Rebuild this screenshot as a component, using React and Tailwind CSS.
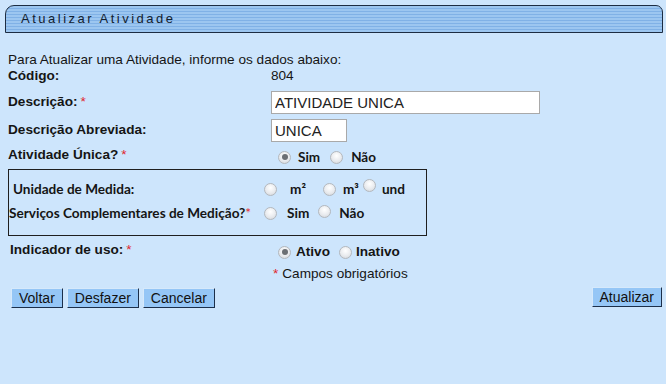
import React from "react";

function Radio({ checked, className = "" }) {
  return (
    <span
      className={
        "inline-flex items-center justify-center w-[13px] h-[13px] rounded-full border border-[#b4b8bd] bg-[radial-gradient(circle_at_50%_35%,#ffffff_0%,#e9ebee_55%,#cfd3d8_100%)] shrink-0 " +
        className
      }
    >
      {checked && <span className="w-[6px] h-[6px] rounded-full bg-[#6b6f74]" />}
    </span>
  );
}

function Req() {
  return <span className="text-[#e0262d] font-normal ml-[3px]">*</span>;
}

function Btn({ children }) {
  return (
    <button className="h-[20px] px-[7px] bg-[#95c6f6] border border-t-[#d6e9fb] border-l-[#d6e9fb] border-r-[#1c2f4a] border-b-[#1c2f4a] text-[14px] text-[#111] leading-none">
      {children}
    </button>
  );
}

export default function App() {
  return (
    <div className="w-[666px] h-[384px] bg-[#cde5fc] font-['Liberation_Sans',Arial,sans-serif] text-[13.6px] text-[#151515] pt-[5px] pl-[5px] overflow-hidden">
      {/* HEADER BAR */}
      <div className="w-[658px] h-[28px] border border-[#1d2d42] rounded-tl-[9px] rounded-tr-[7px] bg-[repeating-linear-gradient(180deg,#9cc6f0_0px,#9cc6f0_2px,#80b1e6_2px,#80b1e6_3px)] flex items-center pl-[15px]">
        <span className="tracking-[2.5px] text-[13px] text-[#12202f]">Atualizar Atividade</span>
      </div>

      {/* FORM */}
      <div className="pl-[3px] pr-[4px]">
        <div className="h-[16px] mt-[19px] flex items-center">
          Para Atualizar uma Atividade, informe os dados abaixo:
        </div>

        <div className="h-[17px] flex items-center font-bold">
          <span className="w-[263px]">Código:</span>
          <span className="font-normal">804</span>
        </div>

        <div className="h-[24px] mt-[5px] flex items-center">
          <span className="w-[263px] font-bold">
            Descrição:<Req />
          </span>
          <input
            readOnly
            value="ATIVIDADE UNICA"
            className="w-[269px] h-[23px] bg-white border border-[#a9a9a9] px-[3px] text-[15px] text-[#222] outline-none font-['Liberation_Sans',Arial,sans-serif]"
          />
        </div>

        <div className="h-[24px] mt-[4px] flex items-center">
          <span className="w-[263px] font-bold">Descrição Abreviada:</span>
          <input
            readOnly
            value="UNICA"
            className="w-[76px] h-[23px] bg-white border border-[#a9a9a9] px-[3px] text-[15px] text-[#222] outline-none font-['Liberation_Sans',Arial,sans-serif]"
          />
        </div>

        <div className="h-[22px] mt-[4px] flex items-center">
          <span className="w-[270px] font-bold -mt-[4px]">
            Atividade Única?<Req />
          </span>
          <div className="flex items-center font-['Lato',sans-serif] font-bold text-[13.5px]">
            <Radio checked />
            <span className="ml-[7px] mr-[10px]">Sim</span>
            <Radio />
            <span className="ml-[8px]">Não</span>
          </div>
        </div>

        {/* BOX */}
        <div className="w-[419px] h-[67px] mt-[1px] border border-[#1f1f1f] font-['Lato',sans-serif] font-bold text-[13.6px] text-[#151515]">
          <div className="h-[18px] mt-[10px] flex items-center">
            <span className="w-[255px] pl-[4px]">Unidade de Medida:</span>
            <Radio />
            <span className="ml-[13px] mr-[17px]">m²</span>
            <Radio />
            <span className="ml-[7px] mr-[4px]">m³</span>
            <Radio className="-mt-[7px]" />
            <span className="ml-[6px]">und</span>
          </div>
          <div className="h-[18px] mt-[6px] flex items-center">
            <span className="w-[255px] whitespace-nowrap">
              Serviços Complementares de Medição?<span className="text-[#e0262d] font-normal">*</span>
            </span>
            <Radio />
            <span className="ml-[10px] mr-[9px]">Sim</span>
            <Radio className="-mt-[3px]" />
            <span className="ml-[8px]">Não</span>
          </div>
        </div>

        <div className="h-[20px] mt-[6px] flex items-center">
          <span className="w-[270px] pl-[2px] font-bold -mt-[3px]">
            Indicador de uso:<Req />
          </span>
          <div className="flex items-center font-bold">
            <Radio checked />
            <span className="ml-[5px] mr-[9px]">Ativo</span>
            <Radio />
            <span className="ml-[4px]">Inativo</span>
          </div>
        </div>

        <div className="h-[18px] mt-[3px] flex items-center pl-[265px]">
          <span className="text-[#e0262d]">*</span>
          <span className="ml-[4px]">Campos obrigatórios</span>
        </div>

        <div className="mt-[4px] flex items-center pl-[3px]">
          <div className="flex gap-[4px]">
            <Btn>Voltar</Btn>
            <Btn>Desfazer</Btn>
            <Btn>Cancelar</Btn>
          </div>
          <div className="ml-auto">
            <Btn>Atualizar</Btn>
          </div>
        </div>
      </div>
    </div>
  );
}
